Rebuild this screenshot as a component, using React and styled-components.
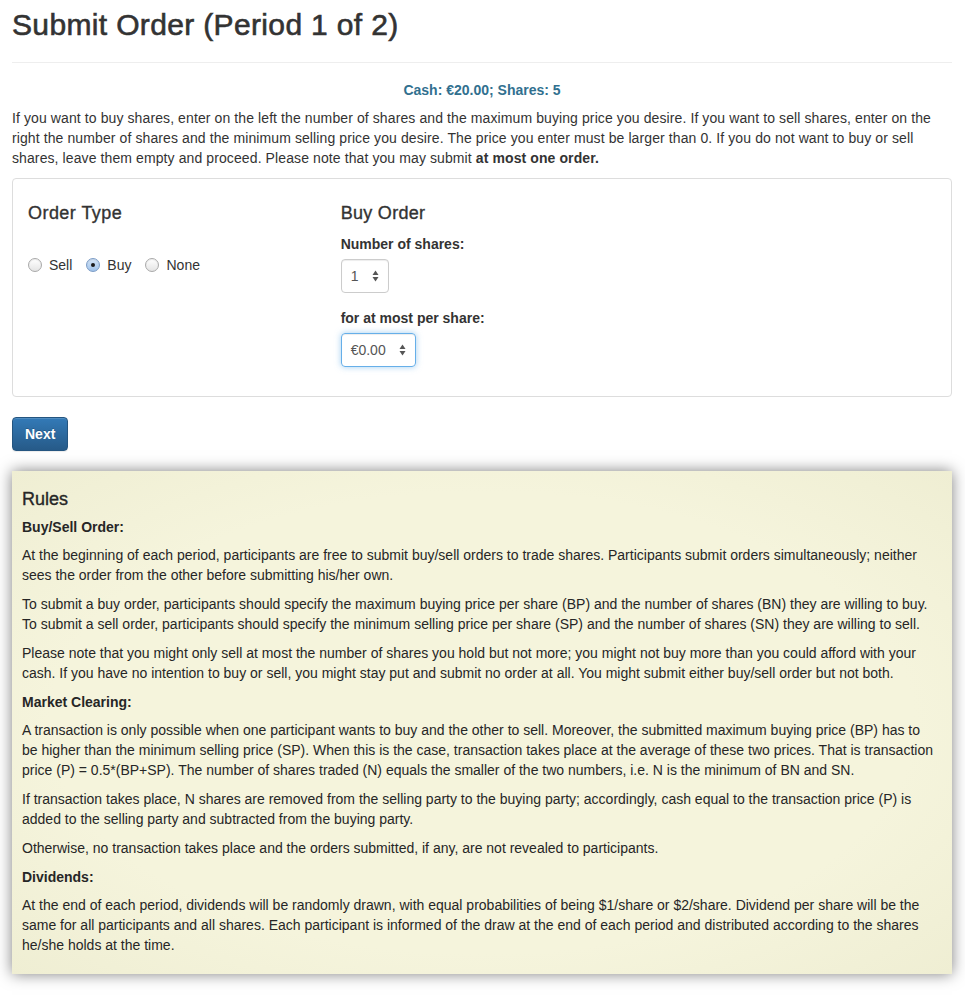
import React from "react";
import styled, { createGlobalStyle } from "styled-components";

const GlobalStyle = createGlobalStyle`
  body {
    margin: 0;
    background: #fff;
    color: #333;
    font-family: "Liberation Sans", Arial, Helvetica, sans-serif;
    font-size: 14px;
    line-height: 20px;
  }
  * { box-sizing: border-box; }
`;

const Page = styled.div`
  width: 940px;
  margin-left: 12px;
  padding-top: 8px;
  padding-bottom: 30px;
`;

const Title = styled.h1`
  font-size: 30px;
  font-weight: 500;
  line-height: 33px;
  letter-spacing: 0.35px;
  -webkit-text-stroke: 0.6px #333;
  margin: 0 0 21px;
  color: #333;
`;

const Rule = styled.hr`
  border: 0;
  border-top: 1px solid #eee;
  margin: 0 0 17px;
`;

const Balance = styled.p`
  margin: 0 0 8px;
  text-align: center;
  font-weight: bold;
  color: #31708f;
`;

const Intro = styled.p`
  margin: 0 0 10px;
  letter-spacing: 0.1px;
`;

const Card = styled.div`
  border: 1px solid #ddd;
  border-radius: 4px;
  padding: 15px 0 14px;
  display: grid;
  grid-template-columns: 1fr 1fr 1fr;
`;

const Column = styled.div`
  padding: 0 15px;
`;

const SubHeading = styled.h4`
  font-size: 18px;
  font-weight: 500;
  line-height: 19.8px;
  letter-spacing: ${(p) => p.$spacing || 0}px;
  -webkit-text-stroke: 0.35px currentColor;
  margin: 10px 0;
`;

const RadioRow = styled.div`
  display: flex;
  align-items: center;
  margin-top: 31px;
  height: 20px;
`;

const RadioLabel = styled.label`
  display: flex;
  align-items: center;
  gap: 7px;
  margin-right: 14px;
  cursor: pointer;
`;

const RadioDot = styled.span`
  width: 14px;
  height: 14px;
  border-radius: 50%;
  display: inline-flex;
  align-items: center;
  justify-content: center;
  border: 1px solid ${(p) => (p.$checked ? "#7b9cc6" : "#a9a9a9")};
  background: ${(p) =>
    p.$checked
      ? "linear-gradient(#d6e6f8, #9fc2ea)"
      : "linear-gradient(#ffffff, #e4e4e4)"};
  box-shadow: inset 0 1px 1px rgba(0, 0, 0, 0.08);

  &::after {
    content: "";
    width: 4px;
    height: 4px;
    border-radius: 50%;
    background: #1a1a1a;
    display: ${(p) => (p.$checked ? "block" : "none")};
  }
`;

const Field = styled.div`
  margin-bottom: 15px;
`;

const FieldLabel = styled.label`
  display: block;
  font-weight: bold;
  margin-bottom: 5px;
`;

const NumberBox = styled.div`
  width: ${(p) => p.$width}px;
  height: 34px;
  display: flex;
  align-items: center;
  justify-content: space-between;
  padding: 0 9px 0 9px;
  border-radius: 4px;
  border: 1px solid ${(p) => (p.$focused ? "#66afe9" : "#ccc")};
  box-shadow: ${(p) =>
    p.$focused
      ? "inset 0 1px 1px rgba(0,0,0,.075), 0 0 6px rgba(102,175,233,.6)"
      : "inset 0 1px 1px rgba(0,0,0,.075)"};
  color: #555;
  font-size: 14px;
`;

const NextButton = styled.button`
  margin-top: 20px;
  height: 34px;
  padding: 0 12px;
  font-family: inherit;
  font-size: 14px;
  font-weight: bold;
  color: #fff;
  border: 1px solid #245580;
  border-radius: 4px;
  background-image: linear-gradient(to bottom, #337ab7 0, #265a88 100%);
  text-shadow: 0 -1px 0 rgba(0, 0, 0, 0.2);
  box-shadow: inset 0 1px 0 rgba(255, 255, 255, 0.15),
    0 1px 1px rgba(0, 0, 0, 0.075);
`;

const RulesBox = styled.div`
  margin-top: 20px;
  padding: 10px 16px 10px 10px;
  background: radial-gradient(ellipse at center, #f5f4dc 65%, #efeed3 100%);
  box-shadow: 0 0 14px rgba(0, 0, 0, 0.5);
  color: #262626;
`;

const RulesTitle = styled.h4`
  font-size: 18px;
  font-weight: 500;
  line-height: 19.8px;
  -webkit-text-stroke: 0.35px currentColor;
  margin: 9px 0 7px;
`;

const RulesLabel = styled.p`
  font-weight: bold;
  margin: 0 0 8px;
`;

const RulesText = styled.p`
  margin: 0 0 9px;
`;

function Spinner() {
  return (
    <svg width="7" height="12" viewBox="0 0 7 12">
      <polygon points="0.5,5 3.5,0.5 6.5,5" fill="#555" />
      <polygon points="0.5,7 3.5,11.5 6.5,7" fill="#555" />
    </svg>
  );
}

function Radio({ label, checked }) {
  return (
    <RadioLabel>
      <RadioDot $checked={checked} />
      {label}
    </RadioLabel>
  );
}

export default function App() {
  return (
    <>
      <GlobalStyle />
      <Page>
        <Title>Submit Order (Period 1 of 2)</Title>
        <Rule />
        <Balance>Cash: €20.00; Shares: 5</Balance>
        <Intro>
          If you want to buy shares, enter on the left the number of shares and
          the maximum buying price you desire. If you want to sell shares, enter
          on the right the number of shares and the minimum selling price you
          desire. The price you enter must be larger than 0. If you do not want
          to buy or sell shares, leave them empty and proceed. Please note that
          you may submit <b>at most one order.</b>
        </Intro>

        <Card>
          <Column>
            <SubHeading $spacing={0.45}>Order Type</SubHeading>
            <RadioRow>
              <Radio label="Sell" />
              <Radio label="Buy" checked />
              <Radio label="None" />
            </RadioRow>
          </Column>
          <Column>
            <SubHeading $spacing={0.3}>Buy Order</SubHeading>
            <Field>
              <FieldLabel>Number of shares:</FieldLabel>
              <NumberBox $width={48}>
                <span>1</span>
                <Spinner />
              </NumberBox>
            </Field>
            <Field>
              <FieldLabel>for at most per share:</FieldLabel>
              <NumberBox $width={75} $focused>
                <span>€0.00</span>
                <Spinner />
              </NumberBox>
            </Field>
          </Column>
          <Column />
        </Card>

        <NextButton>Next</NextButton>

        <RulesBox>
          <RulesTitle>Rules</RulesTitle>
          <RulesLabel>Buy/Sell Order:</RulesLabel>
          <RulesText>
            At the beginning of each period, participants are free to submit
            buy/sell orders to trade shares. Participants submit orders
            simultaneously; neither sees the order from the other before
            submitting his/her own.
          </RulesText>
          <RulesText>
            To submit a buy order, participants should specify the maximum buying
            price per share (BP) and the number of shares (BN) they are willing to
            buy. To submit a sell order, participants should specify the minimum
            selling price per share (SP) and the number of shares (SN) they are
            willing to sell.
          </RulesText>
          <RulesText>
            Please note that you might only sell at most the number of shares you
            hold but not more; you might not buy more than you could afford with
            your cash. If you have no intention to buy or sell, you might stay put
            and submit no order at all. You might submit either buy/sell order but
            not both.
          </RulesText>
          <RulesLabel>Market Clearing:</RulesLabel>
          <RulesText>
            A transaction is only possible when one participant wants to buy and
            the other to sell. Moreover, the submitted maximum buying price (BP)
            has to be higher than the minimum selling price (SP). When this is the
            case, transaction takes place at the average of these two prices. That
            is transaction price (P) = 0.5*(BP+SP). The number of shares traded (N)
            equals the smaller of the two numbers, i.e. N is the minimum of BN and
            SN.
          </RulesText>
          <RulesText>
            If transaction takes place, N shares are removed from the selling party
            to the buying party; accordingly, cash equal to the transaction price
            (P) is added to the selling party and subtracted from the buying party.
          </RulesText>
          <RulesText>
            Otherwise, no transaction takes place and the orders submitted, if any,
            are not revealed to participants.
          </RulesText>
          <RulesLabel>Dividends:</RulesLabel>
          <RulesText>
            At the end of each period, dividends will be randomly drawn, with equal
            probabilities of being $1/share or $2/share. Dividend per share will be
            the same for all participants and all shares. Each participant is
            informed of the draw at the end of each period and distributed
            according to the shares he/she holds at the time.
          </RulesText>
        </RulesBox>
      </Page>
    </>
  );
}
